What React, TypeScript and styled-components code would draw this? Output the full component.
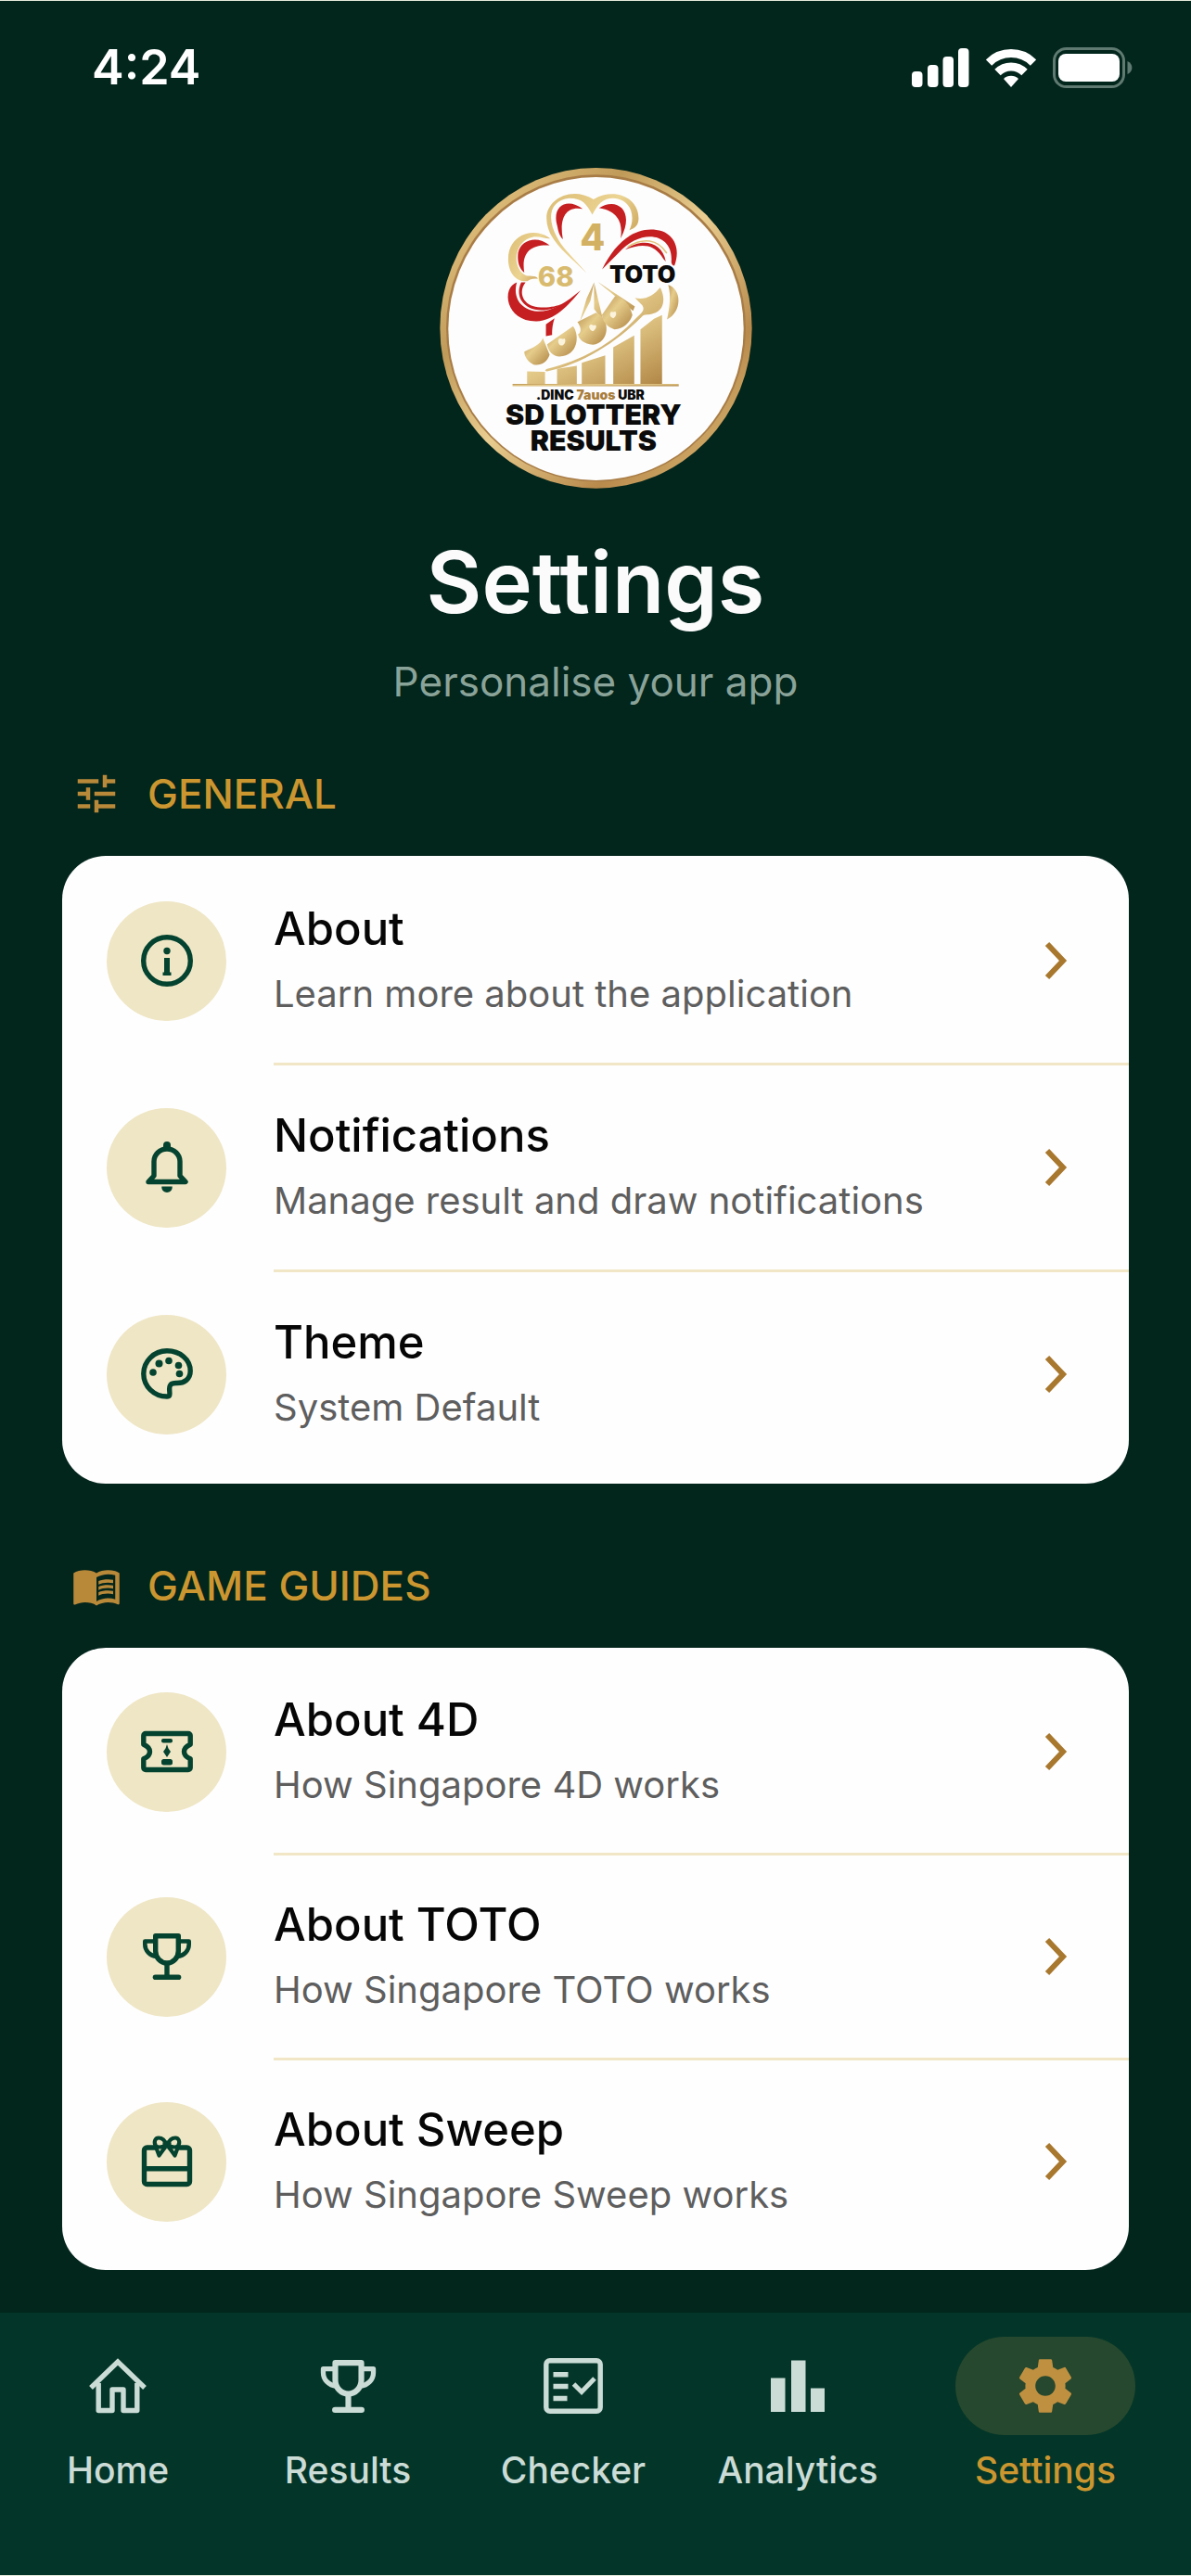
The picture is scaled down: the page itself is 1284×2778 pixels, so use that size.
import React from 'react';
import styled, { createGlobalStyle } from 'styled-components';
import { MdMenuBook, MdSettings, MdTune } from 'react-icons/md';

const color = {
  page: '#02251c',
  nav: '#033629',
  edge: '#e6ebdc',
  gold: '#cb962f',
  goldIcon: '#b9893a',
  chevron: '#a9782f',
  card: '#fefefe',
  disc: '#efe6c5',
  rule: '#f1e6c6',
  green: '#04432f',
  navText: '#cbdcd6',
};

const GlobalStyle = createGlobalStyle`
  *, *::before, *::after { box-sizing: border-box; }
  body {
    margin: 0;
    background: ${color.page};
    font-family: Inter, Roboto, 'Liberation Sans', sans-serif;
    -webkit-font-smoothing: antialiased;
  }
  h1, h2, p, ul { margin: 0; padding: 0; }
  ul { list-style: none; }
  svg { display: block; flex: none; }
`;

const Screen = styled.div`
  min-height: 100vh;
  display: flex;
  flex-direction: column;
  background: ${color.page};
  border-top: 1px solid ${color.edge};
`;

const StatusBar = styled.header`
  height: 144px;
  padding: 0 63px 0 99px;
  display: flex;
  align-items: center;
  justify-content: space-between;
  color: #fff;
`;

const Clock = styled.time`
  font-size: 52px;
  line-height: 60px;
  font-weight: 600;
`;

const StatusIcons = styled.div`
  display: flex;
  align-items: center;
  gap: 18px;
`;

const Main = styled.main`
  flex: 1;
  padding: 36px 67px 46px;
`;

const Hero = styled.section`
  display: flex;
  flex-direction: column;
  align-items: center;
  text-align: center;
`;

const Title = styled.h1`
  margin-top: 46px;
  font-size: 92px;
  line-height: 110px;
  font-weight: 600;
  color: #fbfbfb;
`;

const Subtitle = styled.p`
  margin-top: 25px;
  font-size: 44px;
  line-height: 54px;
  color: #8aa399;
`;

const Section = styled.section<{ $gap: number }>`
  margin-top: ${(p) => p.$gap}px;
`;

const SectionHead = styled.div`
  display: flex;
  align-items: center;
  gap: 28px;
  padding-left: 10px;
  color: ${color.goldIcon};
`;

const SectionTitle = styled.h2`
  font-size: 44px;
  line-height: 54px;
  font-weight: 500;
  color: ${color.gold};
`;

const Card = styled.ul`
  margin-top: 40px;
  padding-bottom: 8px;
  background: ${color.card};
  border-radius: 47px;
  overflow: hidden;
`;

const Item = styled.li`
  & + & > button > span:not(:first-child) {
    border-top-color: ${color.rule};
  }
`;

const RowButton = styled.button`
  width: 100%;
  display: flex;
  align-items: center;
  gap: 51px;
  padding: 0 0 0 48px;
  border: 0;
  background: none;
  font: inherit;
  text-align: left;
  cursor: pointer;
`;

const Disc = styled.span`
  flex: none;
  width: 129px;
  height: 129px;
  margin-top: 3px;
  border-radius: 50%;
  display: grid;
  place-items: center;
  background: ${color.disc};
  color: ${color.green};
`;

const RowBody = styled.span<{ $height: number }>`
  flex: 1;
  min-width: 0;
  height: ${(p) => p.$height}px;
  padding-right: 64px;
  display: flex;
  align-items: center;
  justify-content: space-between;
  border-top: 3px solid transparent;
`;

const RowText = styled.span`
  display: flex;
  flex-direction: column;
  gap: 12px;
`;

const RowTitle = styled.span`
  font-size: 49px;
  line-height: 60px;
  font-weight: 500;
  color: #060606;
`;

const RowNote = styled.span`
  font-size: 40px;
  line-height: 56px;
  color: #5e5e5e;
`;

const NavBar = styled.nav`
  height: 284px;
  padding: 26px 10px 0 0;
  display: grid;
  grid-template-columns: 254fr 242fr 244fr 240fr 294fr;
  align-items: start;
  background: ${color.nav};
  border-bottom: 1px solid ${color.edge};
`;

const NavLink = styled.a<{ $active: boolean }>`
  display: flex;
  flex-direction: column;
  align-items: center;
  gap: 14px;
  text-decoration: none;
  color: ${(p) => (p.$active ? color.gold : color.navText)};
`;

const NavPill = styled.span<{ $active: boolean }>`
  width: 194px;
  height: 106px;
  border-radius: 53px;
  display: grid;
  place-items: center;
  background: ${(p) => (p.$active ? '#26482e' : 'transparent')};
`;

const NavLabel = styled.span`
  font-size: 39px;
  line-height: 48px;
  font-weight: 500;
`;

const Glyph = ({ size = 64, children }: { size?: number; children: React.ReactNode }) => (
  <svg
    width={size}
    height={size}
    viewBox="0 0 64 64"
    fill="none"
    stroke="currentColor"
    strokeWidth="5.4"
    aria-hidden="true"
  >
    {children}
  </svg>
);

const InfoIcon = () => (
  <Glyph>
    <circle cx="32" cy="32" r="25.3" />
    <circle cx="32" cy="21.5" r="3.7" fill="currentColor" stroke="none" />
    <path d="M29 29h6v15.500h1.500V48h-9v-3.500H29z" fill="currentColor" stroke="none" />
  </Glyph>
);

const BellIcon = () => (
  <Glyph>
    <path d="M32 4a4 4 0 0 1 4 4V12h-8V8A4 4 0 0 1 32 4z" fill="currentColor" stroke="none" />
    <path d="M12 47.500L18 41V25.500a14 13.500 0 0 1 28 0V41l6 6.500z" strokeLinejoin="round" />
    <path d="M26.300 52.500h11.400c.6 8.500-12 8.500-11.400 0z" fill="currentColor" stroke="none" />
  </Glyph>
);

const PaletteIcon = () => (
  <Glyph>
    <path
      d="M32 6.800C18 6.800 6.800 18 6.800 31.500 6.800 45 18 56 32 56c3.200 0 3.200-2.200 2.800-5.500C34 43.500 36 41.500 42 41.500 51 41.800 57.200 37 57.200 28.500 57.200 16 46 6.800 32 6.800z"
      strokeLinejoin="round"
    />
    <g fill="currentColor" stroke="none">
      <circle cx="17" cy="30" r="3.800" />
      <circle cx="23.500" cy="20.500" r="4" />
      <circle cx="34" cy="17.500" r="3.800" />
      <circle cx="44.500" cy="22.500" r="3.800" />
      <circle cx="45.500" cy="31.500" r="3.800" />
    </g>
  </Glyph>
);

const TicketIcon = () => (
  <Glyph>
    <path
      d="M9 12.500h46a2.200 2.200 0 0 1 2.200 2.200v9.500c-4.200 1.800-6.700 4.500-6.700 7.800s2.500 6 6.700 7.800v9.500a2.200 2.200 0 0 1-2.200 2.200H9a2.200 2.200 0 0 1-2.200-2.200v-9.500c4.200-1.800 6.700-4.500 6.700-7.800s-2.500-6-6.700-7.800v-9.500A2.200 2.200 0 0 1 9 12.500z"
      strokeLinejoin="round"
    />
    <g fill="currentColor" stroke="none">
      <rect x="26" y="18" width="12" height="4.500" rx="2" />
      <path d="M32 24l1.500 4.500 2.500 3.500-4 6-4-6 2.500-3.500z" />
      <rect x="26" y="40" width="12" height="6.500" rx="2.500" />
    </g>
  </Glyph>
);

const TrophyIcon = ({ size }: { size?: number }) => (
  <Glyph size={size}>
    <path d="M19.700 9.800h24.600V26c0 7-5.300 13-12.300 13s-12.300-6-12.300-13z" strokeLinejoin="round" />
    <path
      d="M19.700 15.500H8.300V19c0 6.500 5 12 12.700 13M44.300 15.500h11.400V19c0 6.500-5 12-12.700 13"
      strokeWidth="4.600"
      strokeLinejoin="round"
    />
    <path d="M32 39v15" />
    <path d="M19.500 54.200h25" strokeWidth="5.600" strokeLinecap="round" />
  </Glyph>
);

const GiftIcon = () => (
  <Glyph>
    <path
      d="M20 17H10.500a3 3 0 0 0-3 3v33.500a3 3 0 0 0 3 3h43a3 3 0 0 0 3-3V20a3 3 0 0 0-3-3H44M7.500 39.800h49"
      strokeLinejoin="round"
    />
    <g strokeWidth="4.200" strokeLinejoin="round" strokeLinecap="round">
      <path d="M32 14.500c-2-5-5-8-9-8s-5.500 5-3 8.500c2 2.500 8 1.500 12-.5z" />
      <path d="M32 14.500c2-5 5-8 9-8s5.500 5 3 8.500c-2 2.500-8 1.500-12-.5z" />
      <path d="M30 16.500l-6.500 9-3-8M34 16.500l6.500 9 3-8" />
      <path d="M29.500 12v5.500M34.500 12v5.500" />
    </g>
  </Glyph>
);

const HomeIcon = () => (
  <Glyph>
    <path d="M3 34L32 6l29 28" />
    <path d="M11.200 29v29.500H26V36h12v22.500h14.800V29" strokeLinejoin="round" />
  </Glyph>
);

const CheckerIcon = () => (
  <Glyph>
    <rect x="2.800" y="4.800" width="58.400" height="54.400" rx="4" />
    <path d="M10.500 19.800h16M10.500 32.500h16M10.500 45.500h15" />
    <path d="M32.500 30l8.500 8.500L55 24" strokeWidth="5" />
  </Glyph>
);

const AnalyticsIcon = () => (
  <Glyph>
    <path
      d="M3 23.500h15.500v36.500H3zM25 4.500h15.500V60H25zM46 34.500h15V60H46z"
      fill="currentColor"
      stroke="none"
    />
  </Glyph>
);

const Chevron = () => (
  <svg width="32" height="44" viewBox="0 0 32 44" fill="none" stroke={color.chevron} strokeWidth="6" aria-hidden="true">
    <path d="M8 4l17 18L8 40" />
  </svg>
);

const SignalIcon = () => (
  <svg width="62" height="42" viewBox="0 0 62 42" fill="currentColor" aria-hidden="true">
    <rect x="0" y="25" width="11.500" height="17" rx="4" />
    <rect x="17" y="18" width="11.500" height="24" rx="4" />
    <rect x="33.500" y="9" width="11.500" height="33" rx="4" />
    <rect x="50" y="0" width="11.500" height="42" rx="4" />
  </svg>
);

const WifiIcon = () => (
  <svg width="54" height="42" viewBox="0 0 54 42" aria-hidden="true">
    <g fill="none" stroke="currentColor" strokeWidth="9">
      <path d="M3 15.500a34 34 0 0 1 48 0" />
      <path d="M12.500 26a20.500 20.500 0 0 1 29 0" />
    </g>
    <path d="M27 42l-8-9a11.500 11.500 0 0 1 16 0z" fill="currentColor" />
  </svg>
);

const BatteryIcon = () => (
  <svg width="86" height="44" viewBox="0 0 86 44" aria-hidden="true">
    <rect x="1.500" y="1.500" width="75" height="41" rx="13" fill="none" stroke="#5f7a71" strokeWidth="3" />
    <rect x="6" y="7" width="66" height="30" rx="8" fill="currentColor" />
    <path d="M80.500 15c6.500 2.500 6.500 11.500 0 14z" fill="#5f7a71" />
  </svg>
);

const Logo = () => (
  <svg width="337" height="346" viewBox="40 33 1012 1039" role="img" aria-label="SD Lottery Results">
    <defs>
      <linearGradient id="ring" x1="0" y1="0" x2="1" y2="1">
        <stop offset="0" stopColor="#f3d592" />
        <stop offset="0.300" stopColor="#c09a58" />
        <stop offset="0.500" stopColor="#e9cd90" />
        <stop offset="0.750" stopColor="#b88a4c" />
        <stop offset="1" stopColor="#e6c67f" />
      </linearGradient>
      <linearGradient id="bar" x1="0" y1="0" x2="1" y2="1">
        <stop offset="0" stopColor="#b9914f" />
        <stop offset="0.400" stopColor="#e6cd8c" />
        <stop offset="1" stopColor="#b08544" />
      </linearGradient>
      <linearGradient id="leaf" x1="0" y1="0" x2="1" y2="0.600">
        <stop offset="0" stopColor="#dcbd74" />
        <stop offset="0.600" stopColor="#ecd493" />
        <stop offset="1" stopColor="#c9a157" />
      </linearGradient>
    </defs>
    <ellipse cx="546" cy="552" rx="505" ry="519" fill="url(#ring)" />
    <ellipse cx="546" cy="552" rx="485" ry="497" fill="#a87c46" />
    <ellipse cx="546" cy="554" rx="478" ry="491" fill="#fdfdfd" />

    <g fill="url(#leaf)">
      <path d="M516 374C450 310 386 265 386 195c0-60 80-105 152-60 70-40 146-5 146 62 0 20-10 32-30 38 20-40 10-100-52-104-35 0-50 20-68 54-18-35-32-54-74-54-80 8-75 95-10 170z" />
      <path d="M398 262c-50-40-136-15-136 66 0 50 30 76 62 72 12-8 22-8 34-8-4-10-20-8-38-10-50-25-40-115 26-126 20 0 36 6 52 6z" />
    </g>
    <g fill="#c61f22">
      <path d="M503 166c-50-38-102-10-82 56 3 18 8 34 18 42-10-50-2-110 64-98z" />
      <path d="M556 163c58-38 118 10 70 98 6-40 0-86-70-98z" />
      <path d="M396 284c-40-34-94-18-102 24-4 32 6 54 20 64-10-60 16-92 82-88z" />
      <path d="M566 362C610 270 680 215 760 238c50 20 56 70 40 112-6 0-10-6-10-12 8-95-100-110-170-30z" />
      <path d="M640 298c50-38 120-30 132 38-4-4-10-10-14-18-30-42-70-38-118-20z" />
      <path d="M290 404c-52 18-36 128 64 126 56-2 104-52 142-100-46 38-90 68-138 68-58-4-82-48-68-94z" />
      <path d="M318 404c-26 34-6 76 40 80 30 4 60-2 78-10-24 18-60 24-88 18-46-12-62-50-44-88z" />
      <path d="M412 520l-28 20v38l20-4c0-22 2-36 8-54z" />
    </g>
    <path d="M650 288c50-30 95-24 124 20" fill="none" stroke="#e3c47c" strokeWidth="5" strokeLinecap="round" />

    <g fill="url(#bar)">
      <path d="M323 692l58 2v44h-58zM420 684l64-10v64h-64zM500 664l76-24v98h-76zM602 614l68-38v162h-68zM690 556l44-34 26-12v228h-70z" />
      <path d="M276 733h538v7H276z" />
      <path d="M780 412c44 14 46 86-4 112 8-40 14-74 4-112z" />
      <path d="M540 404l-12 60-34 66 22-74zM540 404l14 60 16 66-30-40zM552 402l120 80-6 14z" />
      <path d="M314 628c30-14 52-22 60-44l22 54c-8 26-30 36-52 32-16-8-30-24-30-42z" />
      <path d="M388 604l84-58c22 30 16 96-44 98-20 0-38-18-40-40z" />
      <path d="M486 532l60-30c50 20 44 98-10 104-28-2-46-18-48-34 14-8 8-26-2-40z" />
      <path d="M566 508l42-60c40 10 50 40 56 62-6 22-30 46-58 46-24-8-40-26-40-48z" />
      <path d="M672 454c34 8 60-8 82-34 20 40 10 74-20 84-18 8-30 0-40 12C610 600 500 670 388 692c-10 0-6-6 0-8 110-26 210-80 292-168 14-14 26-22 16-38z" />
    </g>
    <g fill="#fbf3dc">
      <path d="M424 592c4-12 12-2 18-6 6-2 8 16-4 22-8 2-16-6-14-16z" />
      <path d="M524 546c6-12 12 0 18-4 8-2 6 14-6 20-6 0-12-8-12-16z" />
      <path d="M592 504c4-10 10 0 16-6 6 4 4 18-6 22-8-2-12-8-10-16z" />
    </g>

    <g fontFamily="Inter, 'Open Sans', sans-serif" textAnchor="middle">
      <text x="535" y="299" fontSize="118" fontWeight="800" fill="#d3b162">4</text>
      <text x="416" y="417" fontSize="88" fontWeight="800" fill="#d9bb70">68</text>
      <g fill="#0b0b0b">
        <text x="697" y="405" fontSize="76" fontWeight="900">TOTO</text>
        <text x="528" y="784" fontSize="42" fontWeight="900">
          .DINC <tspan fill="#a97d3c">7auos</tspan> UBR
        </text>
        <text fontSize="91" fontWeight="900">
          <tspan x="538" y="866">SD LOTTERY</tspan>
          <tspan x="538" y="948">RESULTS</tspan>
        </text>
      </g>
    </g>
  </svg>
);

type Entry = { title: string; note: string; icon: React.ReactNode };

const general: Entry[] = [
  { title: 'About', note: 'Learn more about the application', icon: <InfoIcon /> },
  { title: 'Notifications', note: 'Manage result and draw notifications', icon: <BellIcon /> },
  { title: 'Theme', note: 'System Default', icon: <PaletteIcon /> },
];

const guides: Entry[] = [
  { title: 'About 4D', note: 'How Singapore 4D works', icon: <TicketIcon /> },
  { title: 'About TOTO', note: 'How Singapore TOTO works', icon: <TrophyIcon /> },
  { title: 'About Sweep', note: 'How Singapore Sweep works', icon: <GiftIcon /> },
];

const tabs = [
  { label: 'Home', icon: <HomeIcon /> },
  { label: 'Results', icon: <TrophyIcon size={73} /> },
  { label: 'Checker', icon: <CheckerIcon /> },
  { label: 'Analytics', icon: <AnalyticsIcon /> },
  { label: 'Settings', icon: <MdSettings size={72} color="#bf9040" /> },
];

const EntryList = ({ entries, rowHeight }: { entries: Entry[]; rowHeight: number }) => (
  <Card>
    {entries.map((entry) => (
      <Item key={entry.title}>
        <RowButton type="button">
          <Disc>{entry.icon}</Disc>
          <RowBody $height={rowHeight}>
            <RowText>
              <RowTitle>{entry.title}</RowTitle>
              <RowNote>{entry.note}</RowNote>
            </RowText>
            <Chevron />
          </RowBody>
        </RowButton>
      </Item>
    ))}
  </Card>
);

export default function App() {
  return (
    <>
      <GlobalStyle />
      <Screen>
        <StatusBar>
          <Clock>4:24</Clock>
          <StatusIcons>
            <SignalIcon />
            <WifiIcon />
            <BatteryIcon />
          </StatusIcons>
        </StatusBar>
        <Main>
          <Hero>
            <Logo />
            <Title>Settings</Title>
            <Subtitle>Personalise your app</Subtitle>
          </Hero>
          <Section $gap={67}>
            <SectionHead>
              <MdTune size={54} />
              <SectionTitle>GENERAL</SectionTitle>
            </SectionHead>
            <EntryList entries={general} rowHeight={223} />
          </Section>
          <Section $gap={83}>
            <SectionHead>
              <MdMenuBook size={54} />
              <SectionTitle>GAME GUIDES</SectionTitle>
            </SectionHead>
            <EntryList entries={guides} rowHeight={221} />
          </Section>
        </Main>
        <NavBar aria-label="Main">
          {tabs.map((tab) => {
            const active = tab.label === 'Settings';
            return (
              <NavLink
                key={tab.label}
                href={`#${tab.label.toLowerCase()}`}
                $active={active}
                aria-current={active ? 'page' : undefined}
              >
                <NavPill $active={active}>{tab.icon}</NavPill>
                <NavLabel>{tab.label}</NavLabel>
              </NavLink>
            );
          })}
        </NavBar>
      </Screen>
    </>
  );
}
